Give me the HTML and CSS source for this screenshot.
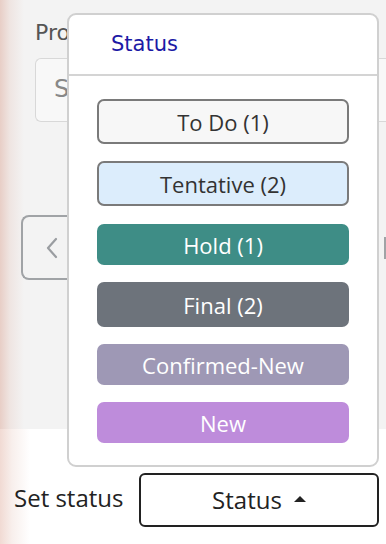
FILE: index.html
```html
<!DOCTYPE html>
<html lang="en">
<head>
<meta charset="utf-8">
<title>Set status</title>
<link rel="stylesheet" href="styles.css">
</head>
<body>
<div class="page">
  <div class="top">
    <div class="field-label">Project</div>
    <div class="field-input">Select</div>
    <div class="nav-row">
      <div class="nav-btn">
        <svg width="14" height="24" viewBox="0 0 14 24"><path d="M11 3 L3 12 L11 21" fill="none" stroke="#9a9da1" stroke-width="2.2" stroke-linecap="round" stroke-linejoin="round"/></svg>
      </div>
      <div class="nav-spacer"></div>
      <div class="nav-edge"></div>
    </div>
  </div>
  <div class="bottom">
    <span class="set-label">Set status</span>
    <div class="status-btn">Status <span class="caret"></span></div>
  </div>
  <div class="popup">
    <div class="popup-head">Status</div>
    <div class="popup-body">
      <div class="opt opt-todo">To Do (1)</div>
      <div class="opt opt-tent">Tentative (2)</div>
      <div class="opt opt-hold">Hold (1)</div>
      <div class="opt opt-final">Final (2)</div>
      <div class="opt opt-conf">Confirmed-New</div>
      <div class="opt opt-new">New</div>
    </div>
  </div>
</div>
</body>
</html>
```

FILE: styles.css
```css
html, body {
  margin: 0;
  padding: 0;
  background: #fff;
}
.page {
  position: relative;
  width: 386px;
  height: 544px;
  overflow: hidden;
  font-family: "Open Sans", "Noto Sans", sans-serif;
}
.top {
  height: 429px;
  box-sizing: border-box;
  padding: 14px 0 0 35px;
  background: linear-gradient(90deg, #e8cec6 0, #efe5e2 10px, #f3f3f3 24px);
}
.field-label {
  font-family: "DejaVu Sans", sans-serif;
  font-size: 22px;
  line-height: 38px;
  color: #555;
}
.field-input {
  margin-top: 6px;
  height: 64px;
  box-sizing: border-box;
  border: 1.5px solid #d8d8d8;
  border-right: none;
  border-radius: 6px 0 0 6px;
  background: #f8f8f8;
  padding-left: 18px;
  font-family: "DejaVu Sans", sans-serif;
  font-size: 24px;
  line-height: 60px;
  color: #888;
}
.nav-row {
  display: flex;
  align-items: center;
  margin: 93px 0 0 -14px;
  height: 65px;
}
.nav-btn {
  width: 100px;
  height: 65px;
  box-sizing: border-box;
  border: 2px solid #a0a3a6;
  border-right: none;
  border-radius: 8px 0 0 8px;
  display: flex;
  align-items: center;
  padding-left: 22px;
}
.nav-spacer {
  flex: 1;
}
.nav-edge {
  width: 2px;
  height: 22px;
  background: #a0a3a6;
}
.bottom {
  height: 115px;
  box-sizing: border-box;
  padding: 44px 0 0 14px;
  display: flex;
  align-items: flex-start;
  background: linear-gradient(90deg, #f1dad3 0, #f8efec 12px, #fff 30px);
}
.set-label {
  font-size: 24px;
  color: #222;
  line-height: 50px;
  width: 125px;
}
.status-btn {
  width: 240px;
  height: 54px;
  box-sizing: border-box;
  border: 2px solid #222;
  border-radius: 6px;
  display: flex;
  align-items: center;
  justify-content: center;
  gap: 12px;
  font-size: 24px;
  color: #222;
  padding-bottom: 2px;
}
.caret {
  width: 0;
  height: 0;
  border-left: 6px solid transparent;
  border-right: 6px solid transparent;
  border-bottom: 6px solid #222;
  margin-top: -1px;
}
.popup {
  position: absolute;
  left: 67px;
  top: 13px;
  width: 312px;
  height: 454px;
  box-sizing: border-box;
  border: 2px solid #d0d0d0;
  border-radius: 9px;
  background: #fff;
}
.popup-head {
  height: 61px;
  box-sizing: border-box;
  border-bottom: 2px solid #d4d4d4;
  padding-left: 42px;
  font-family: "DejaVu Sans", sans-serif;
  font-size: 21px;
  line-height: 58px;
  color: #1d1aa5;
}
.popup-body {
  display: flex;
  flex-direction: column;
  gap: 17px;
  padding: 23px 0 0 28px;
}
.opt {
  width: 252px;
  height: 41px;
  border-radius: 7px;
  display: flex;
  align-items: center;
  justify-content: center;
  font-size: 22px;
  color: #fff;
}
.opt-todo {
  height: 45px;
  box-sizing: border-box;
  border: 2px solid #7a7a7a;
  background: #f7f7f7;
  color: #333;
}
.opt-tent {
  height: 45px;
  box-sizing: border-box;
  border: 2px solid #7a7a7a;
  background: #dcedfc;
  color: #333;
  margin-bottom: 1px;
}
.opt-hold { background: #3e8d86; }
.opt-final { background: #6d737b; height: 45px; }
.opt-conf { background: #9e98b5; }
.opt-new { background: #be8cdb; }
```
